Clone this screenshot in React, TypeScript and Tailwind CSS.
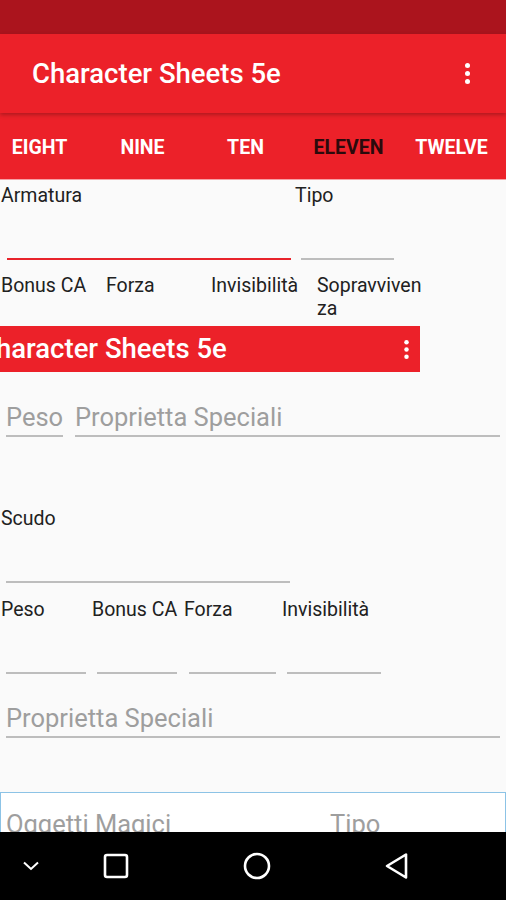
import React from "react";

const font = { fontFamily: "Roboto, 'Noto Sans', sans-serif" };

function Dots({ className }: { className?: string }) {
  return (
    <div className={"flex flex-col items-center gap-[3px] " + (className ?? "")}>
      <span className="w-[5px] h-[5px] rounded-full bg-white" />
      <span className="w-[5px] h-[5px] rounded-full bg-white" />
      <span className="w-[5px] h-[5px] rounded-full bg-white" />
    </div>
  );
}

function Line({ w, active, h }: { w: string; active?: boolean; h: string }) {
  return (
    <div
      className={
        "ml-[6px] border-b-2 " +
        w +
        " " +
        h +
        (active ? " border-[#e8232b]" : " border-[#bdbdbd]")
      }
    />
  );
}

const tabs = ["EIGHT", "NINE", "TEN", "ELEVEN", "TWELVE"];

export default function App() {
  return (
    <div className="w-[506px] h-[900px] flex flex-col overflow-hidden bg-[#fafafa]" style={font}>
      {/* status bar */}
      <div className="h-[34px] bg-[#ab141d] shrink-0" />

      {/* toolbar */}
      <div className="relative z-10 h-[79px] shrink-0 bg-[#ec2129] flex items-center justify-between pl-[32px] pr-[36px] shadow-[0_2px_4px_rgba(0,0,0,0.25)]">
        <h1 className="text-white text-[27.5px] font-medium">Character Sheets 5e</h1>
        <Dots />
      </div>

      {/* tabs */}
      <div className="h-[67px] shrink-0 bg-[#ec2129] flex items-center pt-[4px] -ml-[12px] border-b border-[#f6a0a4]">
        {tabs.map((t) => (
          <div
            key={t}
            className={
              "w-[103px] shrink-0 text-center text-[19.5px] font-bold " +
              (t === "ELEVEN" ? "text-[#2b0a0c]" : "text-white")
            }
          >
            {t}
          </div>
        ))}
      </div>

      {/* content */}
      <div className="flex-1 overflow-hidden text-[#212121] text-[19.5px]">
        {/* Armatura / Tipo */}
        <div className="pt-[5px] flex">
          <div className="w-[295px] pl-[1px]">
            <div className="leading-[22px] h-[22px]">Armatura</div>
            <Line w="w-[284px]" h="h-[53px]" active />
          </div>
          <div className="w-[110px]">
            <div className="leading-[22px] h-[22px]">Tipo</div>
            <Line w="w-[93px]" h="h-[53px]" />
          </div>
        </div>

        <div className="mt-[14px] flex leading-[23px] pl-[1px]">
          <div className="w-[105px]">Bonus CA</div>
          <div className="w-[105px]">Forza</div>
          <div className="w-[106px]">Invisibilità</div>
          <div className="w-[120px]">
            Sopravviven
            <br />
            za
          </div>
        </div>

        {/* glitched toolbar remnant */}
        <div className="mt-[6px] w-[420px] h-[46px] bg-[#ec2129] flex items-center justify-between pr-[11px] overflow-hidden">
          <span className="-ml-[22px] text-white text-[27.5px] font-medium whitespace-nowrap">
            Character Sheets 5e
          </span>
          <Dots className="scale-90" />
        </div>

        {/* Peso / Proprietta */}
        <div className="mt-[31px] flex">
          <div className="w-[57px] ml-[6px] h-[34px] border-b-2 border-[#bdbdbd] text-[25.5px] leading-[28px] text-[#9e9e9e] whitespace-nowrap">
            Peso
          </div>
          <div className="w-[425px] ml-[12px] h-[34px] border-b-2 border-[#bdbdbd] text-[25.5px] leading-[28px] text-[#9e9e9e] whitespace-nowrap">
            Proprietta Speciali
          </div>
        </div>

        {/* Scudo */}
        <div className="mt-[71px] pl-[1px] leading-[22px] h-[22px]">Scudo</div>
        <Line w="w-[284px]" h="h-[53px]" />

        <div className="mt-[16px] flex leading-[22px] h-[22px] pl-[1px] whitespace-nowrap">
          <div className="w-[91px]">Peso</div>
          <div className="w-[92px]">Bonus CA</div>
          <div className="w-[98px]">Forza</div>
          <div className="w-[110px]">Invisibilità</div>
        </div>
        <div className="flex h-[53px]">
          <div className="ml-[6px] w-[80px] border-b-2 border-[#bdbdbd]" />
          <div className="ml-[11px] w-[80px] border-b-2 border-[#bdbdbd]" />
          <div className="ml-[12px] w-[87px] border-b-2 border-[#bdbdbd]" />
          <div className="ml-[11px] w-[94px] border-b-2 border-[#bdbdbd]" />
        </div>

        <div className="mt-[30px] ml-[6px] w-[494px] h-[34px] border-b-2 border-[#bdbdbd] text-[25.5px] leading-[28px] text-[#9e9e9e]">
          Proprietta Speciali
        </div>

        {/* Oggetti magici card */}
        <div className="mt-[54px] bg-white border border-[#8cc3e6] h-[80px] pt-[17px] flex text-[25.5px] leading-[28px] text-[#9e9e9e]">
          <div className="ml-[5px] w-[324px]">Oggetti Magici</div>
          <div>Tipo</div>
        </div>
      </div>

      {/* nav bar */}
      <div className="h-[68px] shrink-0 bg-black flex items-center">
        <svg className="ml-[21px]" width="20" height="20" viewBox="0 0 20 20" fill="none" stroke="white" strokeWidth="2">
          <path d="M3 6.5 L10 13 L17 6.5" />
        </svg>
        <svg className="ml-[62px]" width="26" height="26" viewBox="0 0 26 26" fill="none" stroke="white" strokeWidth="2.6">
          <rect x="2" y="2" width="22" height="22" rx="2" />
        </svg>
        <svg className="ml-[114px]" width="28" height="28" viewBox="0 0 28 28" fill="none" stroke="white" strokeWidth="2.6">
          <circle cx="14" cy="14" r="12" />
        </svg>
        <svg className="ml-[113px]" width="26" height="28" viewBox="0 0 26 28" fill="none" stroke="white" strokeWidth="2.6" strokeLinejoin="round">
          <path d="M22 2.5 L22 25.5 L3 14 Z" />
        </svg>
      </div>
    </div>
  );
}
